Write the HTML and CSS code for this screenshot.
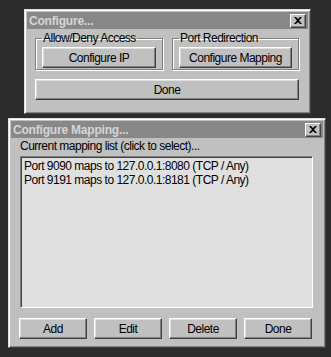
FILE: index.html
```html
<!DOCTYPE html>
<html lang="en">
  <head>
    <meta charset="UTF-8" />
    <title>Configure</title>
    <link rel="stylesheet" href="styles.css">
  </head>
  <body>
    <!-- Configure window -->
    <div class="win win-config">
      <div class="titlebar">
        <span>Configure...</span>
        <div class="close">
          <svg width="8" height="7" viewBox="0 0 8 7"><path d="M0 0h2l2 2 2-2h2L5 3.5 8 7H6L4 5 2 7H0l3-3.5z" fill="#000"/></svg>
        </div>
      </div>
      <div class="config-body">
        <div class="groups">
          <fieldset class="group g-access">
            <legend>Allow/Deny Access</legend>
            <div class="btn">Configure IP</div>
          </fieldset>
          <fieldset class="group g-port">
            <legend>Port Redirection</legend>
            <div class="btn">Configure Mapping</div>
          </fieldset>
        </div>
        <div class="btn btn-done">Done</div>
      </div>
    </div>

    <!-- Mapping window -->
    <div class="win win-mapping">
      <div class="titlebar">
        <span>Configure Mapping...</span>
        <div class="close">
          <svg width="8" height="7" viewBox="0 0 8 7"><path d="M0 0h2l2 2 2-2h2L5 3.5 8 7H6L4 5 2 7H0l3-3.5z" fill="#000"/></svg>
        </div>
      </div>
      <div class="mapping-body">
        <div class="list-label">Current mapping list (click to select)...</div>
        <div class="list">
          <div class="item">Port 9090 maps to 127.0.0.1:8080 (TCP / Any)</div>
          <div class="item">Port 9191 maps to 127.0.0.1:8181 (TCP / Any)</div>
        </div>
        <div class="actions">
          <div class="btn">Add</div>
          <div class="btn">Edit</div>
          <div class="btn">Delete</div>
          <div class="btn">Done</div>
        </div>
      </div>
    </div>
  </body>
</html>
```

FILE: styles.css
```css
* {
  box-sizing: border-box;
}

body {
  margin: 0;
  padding-top: 9px;
  background: #2c2c2c;
  font-family: "Liberation Sans", Arial, sans-serif;
  font-size: 12px;
  letter-spacing: -0.5px;
  color: #000;
}

/* Window frame */
.win {
  background: #c0c0c0;
  border: 1px solid;
  border-color: #dfdfdf #404040 #404040 #dfdfdf;
  box-shadow: inset 1px 1px #ffffff, inset -1px -1px #808080;
  padding: 2px;
}

.titlebar {
  height: 17px;
  background: #888888;
  color: #d6d6d6;
  font-weight: bold;
  letter-spacing: -0.2px;
  display: flex;
  align-items: center;
  justify-content: space-between;
  padding-left: 2px;
}

.close {
  width: 16px;
  height: 14px;
  margin-right: 2px;
  background: #c0c0c0;
  border: 1px solid;
  border-color: #ffffff #404040 #404040 #ffffff;
  box-shadow: inset -1px -1px #808080;
  display: flex;
  align-items: center;
  justify-content: center;
}

/* Buttons */
.btn {
  height: 21px;
  background: #c0c0c0;
  border: 1px solid;
  border-color: #ffffff #404040 #404040 #ffffff;
  box-shadow: inset -1px -1px #808080, inset 1px 1px #dfdfdf;
  display: flex;
  align-items: center;
  justify-content: center;
}

/* Configure window */
.win-config {
  margin-left: 24px;
  width: 287px;
  height: 105px;
}

.config-body {
  padding: 3px 8px 0 8px;
}

.groups {
  display: flex;
  gap: 9px;
}

.group {
  margin: 0;
  padding: 2px 6px 1px 6px;
  border: 1px solid #808080;
  box-shadow: 1px 1px #ffffff, inset 1px 1px #ffffff;
  min-width: 0;
}

.group legend {
  padding: 0 1px;
  line-height: 13px;
}

.g-access {
  width: 128px;
}

.g-port {
  width: 127px;
}

.btn-done {
  margin-top: 9px;
  width: 264px;
}

/* Mapping window */
.win-mapping {
  margin-top: 4px;
  margin-left: 8px;
  width: 318px;
  height: 230px;
}

.mapping-body {
  padding: 2px 8px 0 8px;
}

.list-label {
  padding-left: 1px;
  line-height: 13px;
}

.list {
  margin: 3px 0 0 1px;
  width: 293px;
  height: 152px;
  background: #e0e0e0;
  border: 1px solid;
  border-color: #808080 #ffffff #ffffff #808080;
  box-shadow: inset 1px 1px #404040, inset -1px -1px #dfdfdf;
  padding: 2px 3px;
}

.item {
  line-height: 14px;
}

.actions {
  margin-top: 10px;
  display: flex;
  gap: 7px;
}

.actions .btn {
  width: 68px;
}
```
